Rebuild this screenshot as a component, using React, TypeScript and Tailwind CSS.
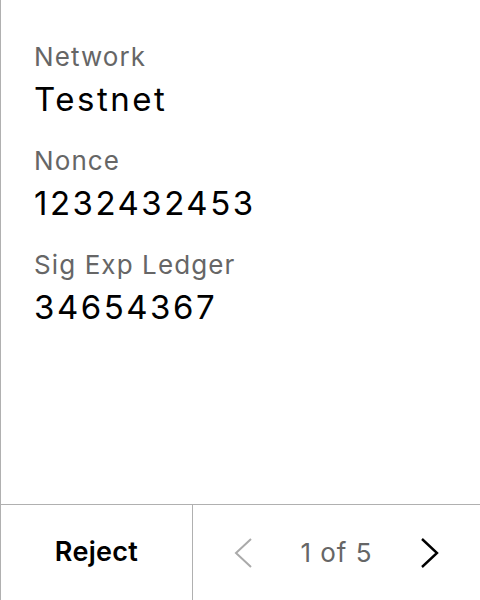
import React from "react";

function Field({ label, value }: { label: string; value: string }) {
  return (
    <div className="flex flex-col gap-[6px]">
      <div className="text-[26px] leading-[32px] tracking-[1.1px] text-[#666666]">{label}</div>
      <div className="text-[33px] leading-[40px] tracking-[2.5px] text-black">{value}</div>
    </div>
  );
}

export default function App() {
  return (
    <div
      className="w-[480px] h-[600px] flex flex-col bg-white border-l border-[#b0b0b0]"
      style={{ fontFamily: "Inter, 'Noto Sans', sans-serif" }}
    >
      <div className="flex-1 flex flex-col gap-[26px] pl-[33px] pt-[41px]">
        <Field label="Network" value="Testnet" />
        <Field label="Nonce" value="1232432453" />
        <Field label="Sig Exp Ledger" value="34654367" />
      </div>
      <div className="h-[96px] flex border-t border-[#b0b0b0]">
        <button className="w-[192px] flex items-center justify-center border-r border-[#b0b0b0] text-[27px] font-semibold tracking-[0.3px] text-black">
          Reject
        </button>
        <div className="flex-1 flex items-center justify-center gap-[48px]">
          <svg width="18" height="30" viewBox="0 0 18 30" fill="none">
            <path d="M17 1 L2 15 L17 29" stroke="#aaaaaa" strokeWidth="2" />
          </svg>
          <span className="text-[26px] leading-[32px] tracking-[1px] text-[#666666]">1 of 5</span>
          <svg width="18" height="30" viewBox="0 0 18 30" fill="none">
            <path d="M1 1 L16 15 L1 29" stroke="#000000" strokeWidth="2.4" />
          </svg>
        </div>
      </div>
    </div>
  );
}
